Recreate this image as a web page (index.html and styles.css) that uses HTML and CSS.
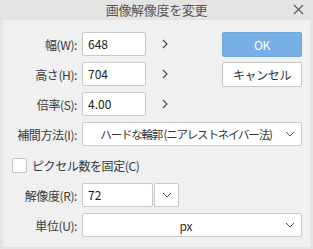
FILE: index.html
```html
<!DOCTYPE html>
<html lang="ja">
<head>
    <meta charset="UTF-8">
    <title>画像解像度を変更</title>
    <link rel="stylesheet" href="styles.css">
</head>
<body>
    <div class="dialog">
        <div class="titlebar">
            <span class="title">画像解像度を変更</span>
            <svg class="close" width="11" height="11" viewBox="0 0 11 11">
                <path d="M1 1 L10 10 M10 1 L1 10" stroke="#555" stroke-width="1.1" fill="none"/>
            </svg>
        </div>

        <div class="content">
            <div class="top">
                <div class="fields">
                    <div class="row">
                        <label class="label">幅(W):</label>
                        <div class="input small">648</div>
                        <svg class="arrow" width="6" height="10" viewBox="0 0 6 10"><path d="M1 1 L5 5 L1 9" stroke="#444" stroke-width="1.1" fill="none"/></svg>
                    </div>
                    <div class="row">
                        <label class="label">高さ(H):</label>
                        <div class="input small">704</div>
                        <svg class="arrow" width="6" height="10" viewBox="0 0 6 10"><path d="M1 1 L5 5 L1 9" stroke="#444" stroke-width="1.1" fill="none"/></svg>
                    </div>
                    <div class="row">
                        <label class="label">倍率(S):</label>
                        <div class="input small">4.00</div>
                        <svg class="arrow" width="6" height="10" viewBox="0 0 6 10"><path d="M1 1 L5 5 L1 9" stroke="#444" stroke-width="1.1" fill="none"/></svg>
                    </div>
                </div>
                <div class="buttons">
                    <button class="btn primary">OK</button>
                    <button class="btn">キャンセル</button>
                </div>
            </div>

            <div class="row">
                <label class="label">補間方法(I):</label>
                <div class="select">
                    <span class="select-text narrow">ハードな輪郭 (ニアレストネイバー法)</span>
                    <svg class="caret" width="10" height="6" viewBox="0 0 10 6"><path d="M1 1 L5 5 L9 1" stroke="#555" stroke-width="1" fill="none"/></svg>
                </div>
            </div>

            <div class="check-row">
                <span class="checkbox"></span>
                <span class="check-label">ピクセル数を固定(C)</span>
            </div>

            <div class="row">
                <label class="label">解像度(R):</label>
                <div class="input res">72</div>
                <div class="drop">
                    <svg width="10" height="6" viewBox="0 0 10 6"><path d="M1 1 L5 5 L9 1" stroke="#555" stroke-width="1" fill="none"/></svg>
                </div>
            </div>

            <div class="row">
                <label class="label">単位(U):</label>
                <div class="select">
                    <span class="select-text">px</span>
                    <svg class="caret" width="10" height="6" viewBox="0 0 10 6"><path d="M1 1 L5 5 L9 1" stroke="#555" stroke-width="1" fill="none"/></svg>
                </div>
            </div>
        </div>
    </div>
</body>
</html>
```

FILE: styles.css
```css
body {
    margin: 0;
    font-family: "Noto Sans CJK JP", "Noto Sans", sans-serif;
    font-size: 12px;
    color: #3a3a3a;
    background-color: #e4e4e4;
}

.dialog {
    width: 313px;
    height: 249px;
    display: flex;
    flex-direction: column;
    background-color: #e4e4e4;
}

.titlebar {
    height: 20px;
    position: relative;
    display: flex;
    align-items: center;
    justify-content: center;
}

.title {
    font-size: 13px;
    color: #555;
    line-height: 20px;
    letter-spacing: -0.3px;
}

.close {
    position: absolute;
    right: 9px;
    top: 4px;
}

.content {
    flex: 1;
    margin: 0 3px 2px 3px;
    background-color: #f0f0f0;
    padding: 12px 8px 0 0;
    display: flex;
    flex-direction: column;
    gap: 6px;
}

.top {
    display: flex;
    justify-content: space-between;
}

.fields {
    display: flex;
    flex-direction: column;
    gap: 6px;
}

.row {
    display: flex;
    align-items: center;
    height: 24px;
}

.label {
    width: 74px;
    margin-right: 5px;
    text-align: right;
    white-space: nowrap;
    letter-spacing: -0.4px;
}

.input {
    height: 24px;
    box-sizing: border-box;
    background-color: white;
    border: 1px solid #c9c9c9;
    border-radius: 2px;
    padding: 0 5px;
    line-height: 22px;
    color: #222;
}

.input.small {
    width: 64px;
}

.input.res {
    width: 71px;
}

.arrow {
    margin-left: 16px;
}

.buttons {
    display: flex;
    flex-direction: column;
    gap: 5px;
}

.btn {
    width: 80px;
    height: 25px;
    box-sizing: border-box;
    font-family: inherit;
    font-size: 12px;
    border-radius: 2px;
    border: 1px solid #c6c6c6;
    background-color: white;
    color: #333;
    padding: 0;
    letter-spacing: -0.4px;
}

.btn.primary {
    background-color: #78b0e6;
    border-color: #6fa8e0;
    color: white;
}

.select {
    width: 220px;
    height: 24px;
    box-sizing: border-box;
    background-color: white;
    border: 1px solid #c9c9c9;
    border-radius: 2px;
    position: relative;
    display: flex;
    align-items: center;
    justify-content: center;
    padding-right: 12px;
}

.select-text {
    color: #333;
}

.select-text.narrow {
    font-size: 11.5px;
    letter-spacing: -1.2px;
    white-space: nowrap;
}

.caret {
    position: absolute;
    right: 6px;
    top: 8px;
}

.check-row {
    display: flex;
    align-items: center;
    height: 24px;
    margin-top: 1px;
    padding-left: 9px;
}

.checkbox {
    width: 15px;
    height: 15px;
    box-sizing: border-box;
    background-color: white;
    border: 1px solid #c2c2c2;
    border-radius: 2px;
    margin-right: 5px;
}

.check-label {
    letter-spacing: -0.4px;
}

.drop {
    width: 25px;
    height: 24px;
    box-sizing: border-box;
    background-color: white;
    border: 1px solid #c9c9c9;
    border-radius: 2px;
    margin-left: 1px;
    display: flex;
    align-items: center;
    justify-content: center;
}
```
